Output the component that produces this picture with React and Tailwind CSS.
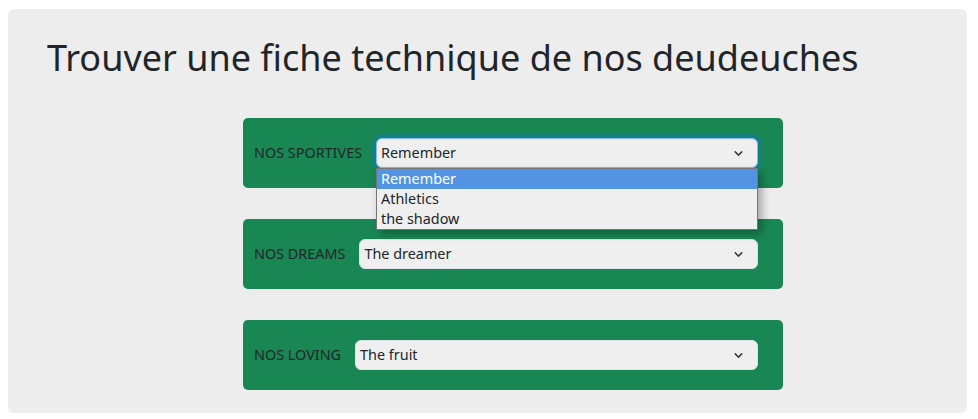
import React from 'react';

const font = { fontFamily: '"Noto Sans", "Open Sans", sans-serif' };

const Chevron = () => (
  <svg width="13" height="13" viewBox="0 0 16 16" fill="none" className="shrink-0">
    <path d="M4 6l4 4 4-4" stroke="#343a40" strokeWidth="1.8" strokeLinecap="round" strokeLinejoin="round" />
  </svg>
);

const FakeSelect = ({ value, focused, children }) => (
  <div className="relative flex-1">
    <div
      className={`flex items-center justify-between h-[30px] pl-[4px] pr-[12px] rounded-[6px] bg-[#efefef] text-[14.4px] text-[#212529] border ${
        focused ? 'border-[#86b7fe] ring-4 ring-[#0d6efd]/25' : 'border-[#dee2e6]'
      }`}
    >
      <span>{value}</span>
      <Chevron />
    </div>
    {children}
  </div>
);

const Card = ({ label, value, focused, children }) => (
  <div className="flex items-center h-[70px] pl-[11px] pr-[25px] bg-[#198754] rounded-[5px]">
    <span className="text-[14.4px] text-[#212529] mr-[14px] whitespace-nowrap">{label}</span>
    <FakeSelect value={value} focused={focused}>
      {children}
    </FakeSelect>
  </div>
);

export default function App() {
  const options = ['Remember', 'Athletics', 'the shadow'];
  return (
    <div className="bg-white min-h-[419px] pt-[9px] pl-[8px]" style={font}>
      <div className="w-[959px] bg-[#ededed] rounded-[6px] pb-[23px]">
        <h1 className="pt-[27px] pl-[39px] text-[36px] leading-[43px] text-[#212529]">
          Trouver une fiche technique de nos deudeuches
        </h1>
        <div className="mt-[39px] ml-[235px] w-[540px] flex flex-col gap-[31px]">
          <div className="relative z-10">
            <Card label="NOS SPORTIVES" value="Remember" focused>
              <div className="absolute left-0 right-0 top-[30px] border border-[#767676] bg-[#efefef] shadow-[4px_4px_8px_rgba(0,0,0,0.3)]">
                {options.map((o, i) => (
                  <div
                    key={o}
                    className={`h-[20px] leading-[20px] pl-[4px] text-[14.4px] ${
                      i === 0 ? 'bg-[#5294e2] text-white' : 'text-[#212529]'
                    }`}
                  >
                    {o}
                  </div>
                ))}
              </div>
            </Card>
          </div>
          <Card label="NOS DREAMS" value="The dreamer" />
          <Card label="NOS LOVING" value="The fruit" />
        </div>
      </div>
    </div>
  );
}
